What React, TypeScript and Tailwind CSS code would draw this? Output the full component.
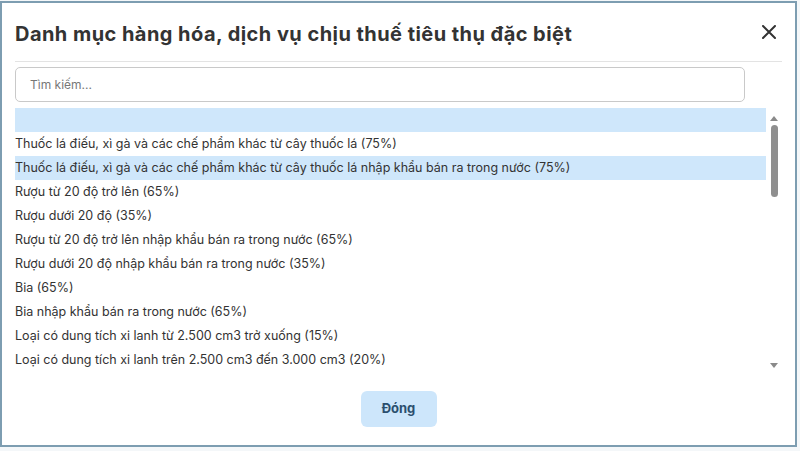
const ITEMS: string[] = [
  '',
  'Thuốc lá điếu, xì gà và các chế phẩm khác từ cây thuốc lá (75%)',
  'Thuốc lá điếu, xì gà và các chế phẩm khác từ cây thuốc lá nhập khẩu bán ra trong nước (75%)',
  'Rượu từ 20 độ trở lên (65%)',
  'Rượu dưới 20 độ (35%)',
  'Rượu từ 20 độ trở lên nhập khẩu bán ra trong nước (65%)',
  'Rượu dưới 20 độ nhập khẩu bán ra trong nước (35%)',
  'Bia (65%)',
  'Bia nhập khẩu bán ra trong nước (65%)',
  'Loại có dung tích xi lanh từ 2.500 cm3 trở xuống (15%)',
  'Loại có dung tích xi lanh trên 2.500 cm3 đến 3.000 cm3 (20%)',
];

const HIGHLIGHTED = [0, 2];

export default function App() {
  return (
    <div
      className="w-[800px] h-[451px] bg-[#f4f7f9] pt-[1px] pr-[3px] pb-[4px] overflow-hidden"
      style={{ fontFamily: 'Inter, "Noto Sans", sans-serif' }}
    >
      <div className="h-full border-2 border-[#7d9db1] bg-white flex flex-col px-[13px]">
        {/* header */}
        <div className="flex items-center justify-between h-[59px] border-b border-[#e3e3e3]">
          <h2 className="text-[20px] font-bold text-[#333] tracking-[0.45px] pt-[3px]">
            Danh mục hàng hóa, dịch vụ chịu thuế tiêu thụ đặc biệt
          </h2>
          <button className="mr-[6px] text-[#333]" aria-label="Đóng">
            <svg width="14" height="14" viewBox="0 0 14 14">
              <path d="M1 1L13 13M13 1L1 13" stroke="currentColor" strokeWidth="2" strokeLinecap="round" />
            </svg>
          </button>
        </div>

        {/* search */}
        <div className="pt-[5px] pr-[37px]">
          <div className="h-[35px] border border-[#c9c9c9] rounded-[5px] flex items-center px-[14px] text-[12px] text-[#777]">
            Tìm kiếm...
          </div>
        </div>

        {/* list */}
        <div className="flex mt-[6px] h-[264px]">
          <div className="flex-1 flex flex-col">
            {ITEMS.map((item, i) => (
              <div
                key={i}
                className={`h-[24px] flex items-center text-[12.5px] text-[#333] whitespace-nowrap ${
                  HIGHLIGHTED.includes(i) ? 'bg-[#cfe7fb]' : ''
                }`}
              >
                {item}
              </div>
            ))}
          </div>
          <div className="w-[16px] flex flex-col items-center pt-[8px] pb-[4px]">
            <svg width="8" height="5" viewBox="0 0 8 5">
              <path d="M0 5L4 0L8 5Z" fill="#8a8a8a" />
            </svg>
            <div className="w-[7px] h-[72px] bg-[#8f8f8f] rounded-full mt-[4px]" />
            <div className="flex-1" />
            <svg width="8" height="5" viewBox="0 0 8 5">
              <path d="M0 0L4 5L8 0Z" fill="#8a8a8a" />
            </svg>
          </div>
        </div>

        {/* footer */}
        <div className="flex justify-center pt-[19px]">
          <button className="w-[76px] h-[36px] rounded-[6px] bg-[#cde6fb] text-[#2b4f6e] text-[13px] font-bold">
            Đóng
          </button>
        </div>
      </div>
    </div>
  );
}
